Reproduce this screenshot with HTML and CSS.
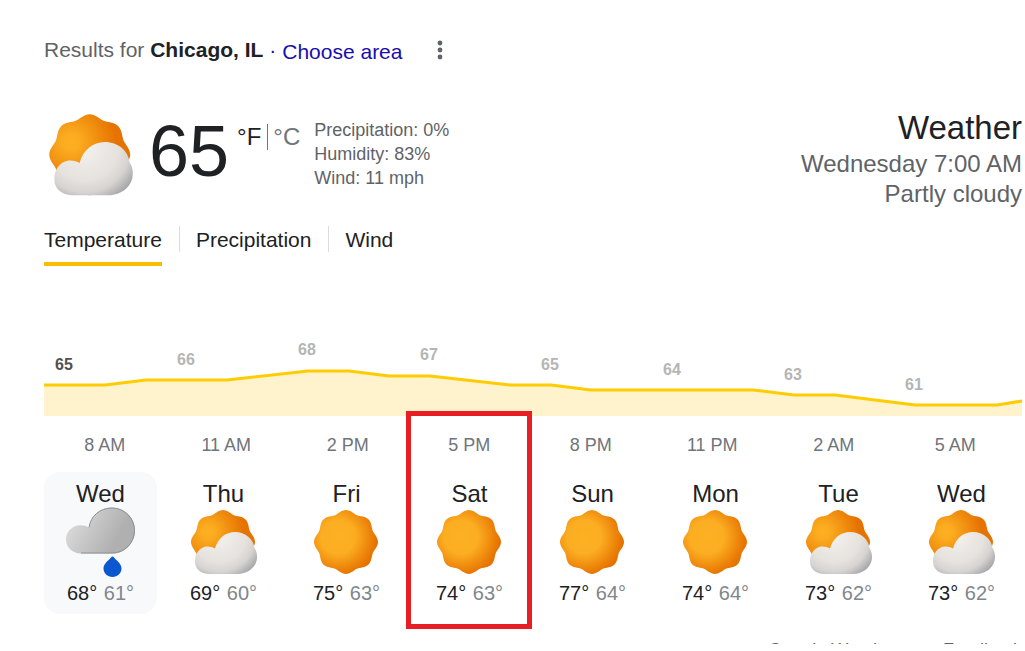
FILE: index.html
```html
<!DOCTYPE html>
<html lang="en">
<head>
<meta charset="utf-8">
<meta name="viewport" content="width=device-width, initial-scale=1">
<title>Weather</title>
<link rel="stylesheet" href="styles.css">
</head>
<body>
<svg class="defs" aria-hidden="true">
  <defs>
    <radialGradient id="sunFill" gradientUnits="userSpaceOnUse" cx="24" cy="27" r="42">
      <stop offset="0" stop-color="#fdb022"/>
      <stop offset=".4" stop-color="#fcae22"/>
      <stop offset=".92" stop-color="#e67200"/>
    </radialGradient>
    <radialGradient id="sunDim" gradientUnits="userSpaceOnUse" cx="17" cy="22" r="36">
      <stop offset="0" stop-color="#fdb022"/>
      <stop offset=".2" stop-color="#fbab1f"/>
      <stop offset="1" stop-color="#e67200"/>
    </radialGradient>
    <radialGradient id="cloudFill" gradientUnits="userSpaceOnUse" cx="28" cy="26" r="48">
      <stop offset="0" stop-color="#f3f1ee"/>
      <stop offset=".55" stop-color="#e6e2de"/>
      <stop offset=".75" stop-color="#d6d3d1"/>
      <stop offset="1" stop-color="#9d9da1"/>
    </radialGradient>
    <linearGradient id="greyFill" gradientUnits="userSpaceOnUse" x1="4" y1="14" x2="48" y2="38">
      <stop offset="0" stop-color="#dadada"/>
      <stop offset="1" stop-color="#b0b0b0"/>
    </linearGradient>
    <path id="sunShape" d="M32 0C36.5 0 40.3 4 43 5.200C46 6.400 51.400 6.200 54.600 9.400C57.800 12.600 57.600 18 58.800 21C60 23.700 64 27.500 64 32C64 36.500 60 40.300 58.800 43C57.600 46 57.800 51.400 54.600 54.600C51.400 57.800 46 57.600 43 58.800C40.300 60 36.500 64 32 64C27.500 64 23.700 60 21 58.800C18 57.600 12.600 57.800 9.400 54.600C6.200 51.400 6.400 46 5.200 43C4 40.300 0 36.500 0 32C0 27.500 4 23.700 5.200 21C6.400 18 6.200 12.600 9.400 9.400C12.600 6.200 18 6.400 21 5.200C23.700 4 27.500 0 32 0Z"/>
    <symbol id="sunny" viewBox="-1 0 68 66"><use href="#sunShape" fill="url(#sunFill)"/></symbol>
    <symbol id="partly" viewBox="-1 0 68 66">
      <use href="#sunShape" fill="url(#sunDim)"/>
      <path d="M18 64C10 64 4 58.500 4 52C4 48 4.500 45 6 43C9 38 13 36.500 16.500 36.500C19.500 36.500 22 37.300 24 38.500C26.500 28.500 34.500 22 44 22C54.500 22 62.500 29 63.500 38C65.500 41 66.200 44 66 48C65.500 57 57 64 47 64Z" fill="url(#cloudFill)"/>
    </symbol>
    <symbol id="rain" viewBox="0 0 70 70">
      <path d="M15 46.500C6 46.500 0 40 0 32.500C0 24.500 6.500 18.300 14.500 18.300C17.500 18.300 20.500 19 23 20.500C24.500 8.500 34 .5 46 .5C59 .5 69 11 69 23.500C69 36 59 46.500 46.500 46.500Z" fill="url(#greyFill)"/>
      <path d="M23 20.500C24.500 9 34 1 46 1C58.700 1 68.500 11.300 68.500 23.500C68.500 35.700 58.700 46 46.500 46H15" fill="none" stroke="#8e9194" stroke-width="1"/>
      <path d="M46.500 49.500C47.100 49.500 47.500 49.900 48 50.500C50 53.500 55.500 56 55.500 61.500C55.500 66.300 51.500 70 46.500 70S37.500 66.300 37.500 61.500C37.500 56 43 53.500 45 50.500C45.500 49.900 45.900 49.500 46.500 49.500Z" fill="#0b57d0"/>
    </symbol>
  </defs>
</svg>
<main class="weather">
  <header class="location">
    <p class="place">Results for <b>Chicago, IL</b> <span>·</span></p>
    <a class="choose" href="#">Choose area</a>
    <button class="more" type="button" aria-label="More options"><svg viewBox="0 0 6 20"><circle cx="3" cy="3" r="2.400"/><circle cx="3" cy="10" r="2.400"/><circle cx="3" cy="17" r="2.400"/></svg></button>
  </header>

  <section class="current">
    <svg class="now-icon" role="img" aria-label="Partly cloudy"><use href="#partly"/></svg>
    <div class="degrees">65</div>
    <div class="units"><b>°F</b><a href="#">°C</a></div>
    <div class="facts">
      <div>Precipitation: 0%</div>
      <div>Humidity: 83%</div>
      <div>Wind: 11 mph</div>
    </div>
    <div class="summary">
      <h1>Weather</h1>
      <div>Wednesday 7:00 AM</div>
      <div>Partly cloudy</div>
    </div>
  </section>

  <nav class="tabs">
    <button class="tab active" type="button">Temperature</button>
    <button class="tab" type="button">Precipitation</button>
    <button class="tab" type="button">Wind</button>
  </nav>

  <svg class="chart" viewBox="0 0 978 80" role="img" aria-label="Hourly temperature">
    <path class="area" d="M0 49H61L102 44H183L264 35H305L345 40H386L467 49H507L547 54H709L750 59H791L871 69H953L978 65V80H0Z"/>
    <path class="line" d="M0 49H61L102 44H183L264 35H305L345 40H386L467 49H507L547 54H709L750 59H791L871 69H953L978 65"/>
    <g class="labels">
      <text class="selected" x="20" y="34">65</text>
      <text x="142" y="29">66</text>
      <text x="263" y="19">68</text>
      <text x="385" y="24">67</text>
      <text x="506" y="34">65</text>
      <text x="628" y="39">64</text>
      <text x="749" y="44">63</text>
      <text x="870" y="54">61</text>
    </g>
  </svg>
  <div class="hours">
    <span>8 AM</span><span>11 AM</span><span>2 PM</span><span>5 PM</span><span>8 PM</span><span>11 PM</span><span>2 AM</span><span>5 AM</span>
  </div>

  <section class="days">
    <div class="day today"><h2>Wed</h2><svg class="icon rain"><use href="#rain"/></svg><p>68° <span>61°</span></p></div>
    <div class="day"><h2>Thu</h2><svg class="icon"><use href="#partly"/></svg><p>69° <span>60°</span></p></div>
    <div class="day"><h2>Fri</h2><svg class="icon"><use href="#sunny"/></svg><p>75° <span>63°</span></p></div>
    <div class="day marked"><h2>Sat</h2><svg class="icon"><use href="#sunny"/></svg><p>74° <span>63°</span></p></div>
    <div class="day"><h2>Sun</h2><svg class="icon"><use href="#sunny"/></svg><p>77° <span>64°</span></p></div>
    <div class="day"><h2>Mon</h2><svg class="icon"><use href="#sunny"/></svg><p>74° <span>64°</span></p></div>
    <div class="day"><h2>Tue</h2><svg class="icon"><use href="#partly"/></svg><p>73° <span>62°</span></p></div>
    <div class="day"><h2>Wed</h2><svg class="icon"><use href="#partly"/></svg><p>73° <span>62°</span></p></div>
  </section>

  <footer class="credits"><a href="#">Google Weather</a><a href="#">Feedback</a></footer>
</main>
</body>
</html>
```
FILE: styles.css
```css
* { box-sizing: border-box; }
body {
  margin: 0;
  background: #fff;
  color: #202124;
  font-family: "Liberation Sans", Arial, sans-serif;
}
h1, h2, p { margin: 0; font-weight: 400; }
a { color: inherit; text-decoration: none; }
button { border: 0; padding: 0; background: none; color: inherit; font: inherit; }
.defs { position: absolute; width: 0; height: 0; }

.weather { padding: 36px 3px 0 44px; }

.location { display: flex; align-items: flex-start; font-size: 21px; line-height: 28px; }
.place { color: #5f6368; }
.place b { color: #202124; }
.place span { color: #1a0dab; }
.choose { margin: 2px 0 0 6px; color: #1a0dab; }
.more { margin: 4px 0 0 35px; height: 20px; }
.more svg { display: block; width: 6px; height: 20px; fill: #5f6368; }

.current { display: flex; align-items: flex-start; height: 108px; margin-top: 44px; }
.now-icon { width: 86px; height: 84px; margin: 4px 0 0 4px; }
.degrees { margin: 1px 0 0 15px; font-size: 72px; line-height: 80px; }
.units { display: flex; margin: 14px 0 0 8px; font-size: 24px; line-height: 26px; }
.units b { padding-right: 6px; border-right: 1px solid #70757a; font-weight: 400; }
.units a { padding-left: 5px; color: #70757a; }
.facts { margin: 8px 0 0 14px; color: #5f6368; font-size: 18px; line-height: 24px; }
.summary { margin-left: auto; color: #5f6368; font-size: 24px; line-height: 30px; text-align: right; }
.summary h1 { padding-bottom: 4px; color: #202124; font-size: 33px; line-height: 35px; }

.tabs { display: flex; margin-top: 8px; font-size: 21px; line-height: 28px; }
.tab { height: 40px; padding-bottom: 12px; }
.tab.active { border-bottom: 4px solid #fbbc04; padding-bottom: 8px; }
.tab + .tab {
  margin-left: 17px;
  padding-left: 17px;
  background: linear-gradient(#dadce0, #dadce0) 0 0 / 1px 26px no-repeat;
}

.chart { display: block; width: 100%; margin-top: 70px; overflow: visible; }
.area { fill: #fef3cd; }
.line { fill: none; stroke: #fc0; stroke-width: 3; }
.labels { fill: #b5b5b5; font-size: 16px; font-weight: 700; text-anchor: middle; }
.labels .selected { fill: #505050; }

.hours {
  display: grid;
  grid-template-columns: repeat(8, 1fr);
  margin-top: 18px;
  padding-right: 6px;
  color: #70757a;
  font-size: 18px;
  line-height: 22px;
  text-align: center;
}

.days { display: grid; grid-template-columns: repeat(8, 1fr); gap: 10px; margin-top: 16px; padding-right: 4px; }
.day { position: relative; height: 142px; padding-top: 8px; text-align: center; border-radius: 16px; }
.today { background: #f8f9fa; }
.day h2 { font-size: 24px; line-height: 28px; }
.icon { display: block; width: 68px; height: 66px; margin: 2px auto 0; }
.icon.rain { width: 70px; height: 70px; margin: -1px auto; }
.day p { margin-top: 6px; font-size: 20px; line-height: 22px; }
.day p span { margin-left: 1px; color: #80868b; }
.marked::after {
  content: "";
  position: absolute;
  inset: -61px -6px -15px -7px;
  border: 5px solid #e81e25;
}

.credits {
  display: flex;
  justify-content: flex-end;
  gap: 44px;
  height: 5px;
  margin-top: 25px;
  overflow: hidden;
  color: #5f6368;
  font-size: 18px;
  line-height: 22px;
}
```
